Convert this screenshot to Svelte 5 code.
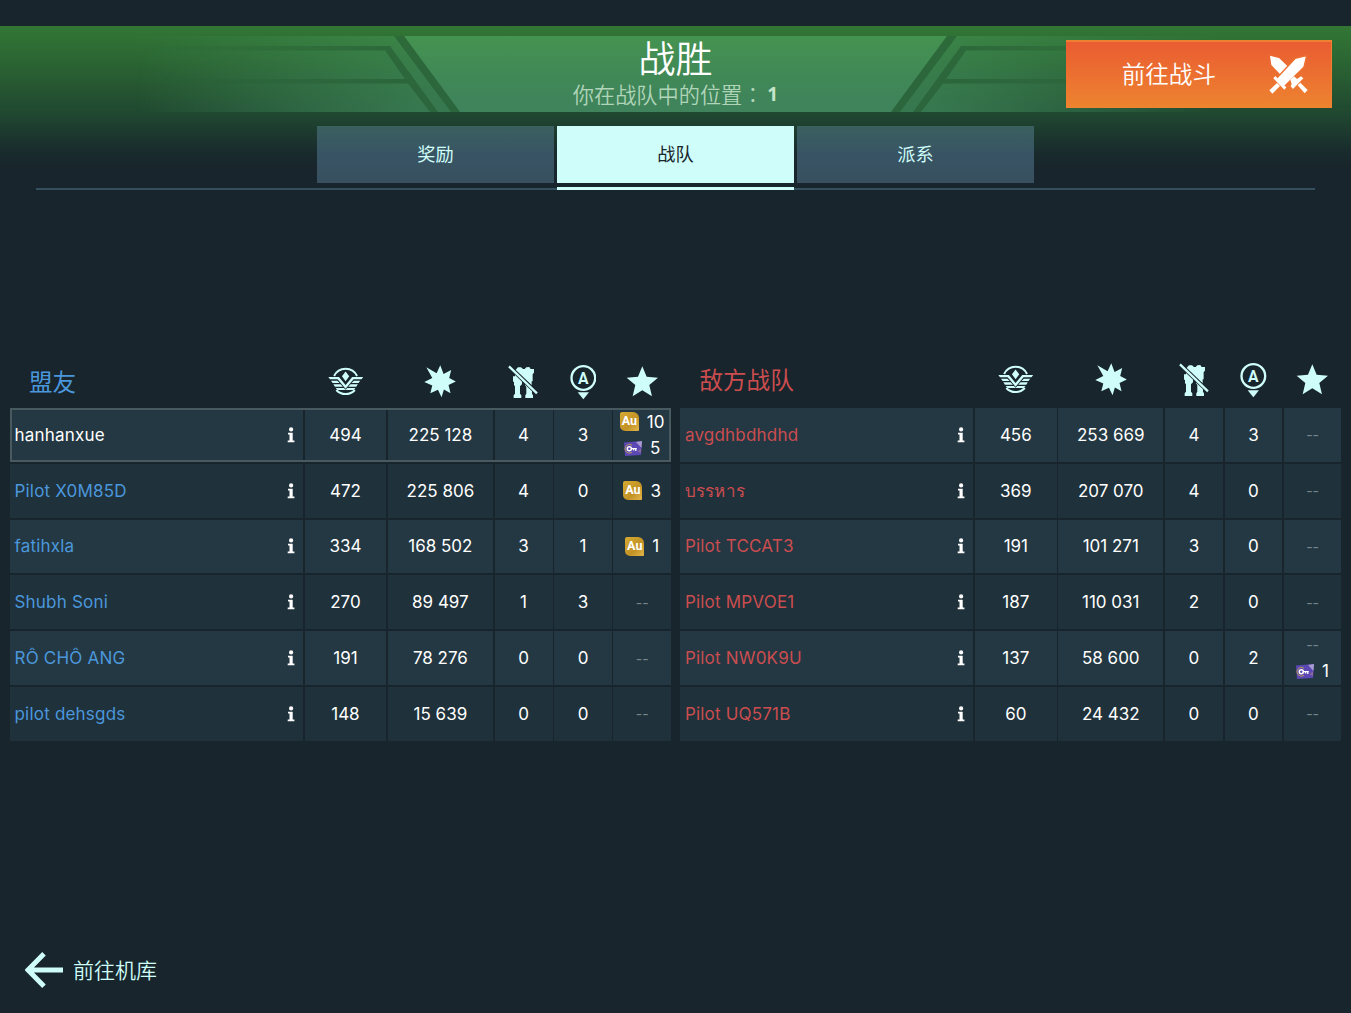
<script>
  const tabs = ["奖励", "战队", "派系"];
  let activeTab = "战队";

  const columns = ["rank", "damage", "kills", "beacons", "star"];

  const teams = [
    {
      title: "盟友",
      side: "ally",
      players: [
        { name: "hanhanxue", stats: ["494", "225 128", "4", "3"], gold: 10, keys: 5, me: true },
        { name: "Pilot X0M85D", stats: ["472", "225 806", "4", "0"], gold: 3 },
        { name: "fatihxla", stats: ["334", "168 502", "3", "1"], gold: 1 },
        { name: "Shubh Soni", stats: ["270", "89 497", "1", "3"] },
        { name: "RÔ CHÔ ANG", stats: ["191", "78 276", "0", "0"] },
        { name: "pilot dehsgds", stats: ["148", "15 639", "0", "0"] },
      ],
    },
    {
      title: "敌方战队",
      side: "enemy",
      players: [
        { name: "avgdhbdhdhd", stats: ["456", "253 669", "4", "3"] },
        { name: "บรรหาร", stats: ["369", "207 070", "4", "0"] },
        { name: "Pilot TCCAT3", stats: ["191", "101 271", "3", "0"] },
        { name: "Pilot MPVOE1", stats: ["187", "110 031", "2", "0"] },
        { name: "Pilot NW0K9U", stats: ["137", "58 600", "0", "2"], keys: 1 },
        { name: "Pilot UQ571B", stats: ["60", "24 432", "0", "0"] },
      ],
    },
  ];
</script>

<div class="screen">
  <header>
    <svg class="banner" viewBox="0 0 1351 140" width="1351" height="140">
      <defs>
        <linearGradient id="side" x1="0" x2="1" y1="0" y2="0">
          <stop offset="0.1" stop-color="#5fc585" stop-opacity="0" />
          <stop offset="0.31" stop-color="#5fc585" stop-opacity="0.24" />
          <stop offset="0.69" stop-color="#5fc585" stop-opacity="0.24" />
          <stop offset="0.9" stop-color="#5fc585" stop-opacity="0" />
        </linearGradient>
        <linearGradient id="mid" x1="0" x2="0" y1="0" y2="1">
          <stop offset="0" stop-color="#6ccb78" stop-opacity="0.2" />
          <stop offset="1" stop-color="#62b795" stop-opacity="0.18" />
        </linearGradient>
        <linearGradient id="base" x1="0" x2="0" y1="0" y2="1">
          <stop offset="0" stop-color="#3c8558" stop-opacity="0" />
          <stop offset="1" stop-color="#3c8558" stop-opacity="0.38" />
        </linearGradient>
        <linearGradient id="line" gradientUnits="userSpaceOnUse" x1="140" x2="400" y1="0" y2="0">
          <stop offset="0" stop-color="#265c33" stop-opacity="0" />
          <stop offset="1" stop-color="#265c33" stop-opacity="0.65" />
        </linearGradient>
        <linearGradient id="fade" x1="0" x2="1" y1="0" y2="0">
          <stop offset="0.1" stop-color="#fff" stop-opacity="0" />
          <stop offset="0.31" stop-color="#fff" />
          <stop offset="0.69" stop-color="#fff" />
          <stop offset="0.9" stop-color="#fff" stop-opacity="0" />
        </linearGradient>
        <mask id="sides"><rect width="1351" height="140" fill="url(#fade)" /></mask>
        <g id="struts">
          <path d="M140 20H390L398 31L438 86H430L408 57.500H140V53H405L385 24.500H140Z" fill="url(#line)" />
          <path d="M394 10H404L460 86H451Z" fill="#265c33" fill-opacity="0.65" />
        </g>
      </defs>
      <rect y="10" width="1351" height="76" fill="url(#base)" mask="url(#sides)" />
      <rect y="10" width="1351" height="76" fill="url(#side)" />
      <path d="M404 10H947L891 86H460Z" fill="url(#mid)" />
      <use href="#struts" />
      <use href="#struts" transform="translate(1351 0) scale(-1 1)" />
    </svg>

    <div class="result">
      <h1>战胜</h1>
      <p>你在战队中的位置<span class="colon">：</span><b>1</b></p>
    </div>

    <button class="battle">
      <span>前往战斗</span>
      <svg viewBox="808 106 117 117" width="39" height="39" fill="#fff">
        <path d="M811 108L838 115L863 139L841 163L815 136Z" />
        <path d="M887 116L921 108L913 142L852 203L828 179Z" stroke="#ed7230" stroke-width="4" />
        <path d="M827 169L860 203L854 210L821 176Z" />
        <path d="M832 190L841 199L818 222L809 212Z" />
        <path d="M872 180L883 170L889 175L892 178L904 170L911 176L880 208L873 200L876 193Z" />
        <path d="M894 197L902 189L924 211L915 221Z" />
      </svg>
    </button>

    <nav>
      {#each tabs as tab}
        <button class="tab" class:active={tab === activeTab} on:click={() => (activeTab = tab)}>
          {tab}
        </button>
      {/each}
    </nav>
  </header>

  <main>
    {#each teams as team}
      <section class={team.side}>
        <div class="row head">
          <h2>{team.title}</h2>
          {#each columns as column}
            <div class="icon">
              {#if column === "rank"}
                <svg viewBox="53 54 107 86" width="35.500" height="28.700">
                  <path d="M71.500 81A38 38 0 0 1 140.500 81M78 123A38 38 0 0 0 134 123" fill="none" stroke="#cffdf9" stroke-width="6" />
                  <path d="M106 67L117 82L106 97L95 82Z" fill="#cffdf9" />
                  <path d="M54 84H86L106 108L126 84H159L154 91H130L106 119L82 91H59Z" fill="#cffdf9" />
                  <path d="M62 95H81L88 102H67ZM150 95H131L124 102H145ZM69 106H91L98 113H74ZM143 106H121L114 113H138ZM76 117H101L106 122L111 117H136L130 123H82Z" fill="#cffdf9" />
                </svg>
              {:else if column === "damage"}
                <svg viewBox="342 47 98 98" width="32.500" height="32.500">
                  <path d="M391 48L401 74L424 62L418 86L438 97L416 107L422 132L402 121L395 144L384 122L361 132L367 109L343 98L367 86L349 54L380 72Z" fill="#cffdf9" />
                </svg>
              {:else if column === "kills"}
                <svg viewBox="596 48 91 101" width="30.300" height="33.700">
                  <path d="M618 64L626 55H635L641 60H646L651 55L660 54L664 60H674V71L670 76V97H667V110L668 112V134L671 139V147H648V139L651 134V114L647 108V97H638V106L632 112V134L636 139V147H613V139L617 134V112L614 108V98H611V82H617V72Z" fill="#cffdf9" />
                  <path d="M597 50L685 134" stroke="#18252c" stroke-width="12.500" />
                  <path d="M599 52L683 133" stroke="#cffdf9" stroke-width="7" />
                </svg>
              {:else if column === "beacons"}
                <svg viewBox="778 41 80 108" width="26.700" height="36">
                  <circle cx="818" cy="83" r="35.500" fill="none" stroke="#cffdf9" stroke-width="7" />
                  <text x="818" y="100" text-anchor="middle">A</text>
                  <path d="M801 126H835L818 147Z" fill="#cffdf9" />
                </svg>
              {:else}
                <svg viewBox="947 48 97 92" width="32.300" height="30.700">
                  <path d="M996 49L1009 80L1043 83L1017 105L1025 139L996 121L967 139L975 105L949 83L983 80Z" fill="#cffdf9" />
                </svg>
              {/if}
            </div>
          {/each}
        </div>

        {#each team.players as player}
          <div class="row" class:me={player.me}>
            <div class="cell name">
              <span>{player.name}</span>
              <svg viewBox="0 0 8 16" width="8" height="16" fill="#fff">
                <circle cx="4.100" cy="2.400" r="2.100" />
                <path d="M1 5.800H5.700V13.400H7.400V15.200H0.700V13.400H2.500V7.600H1Z" />
              </svg>
            </div>
            {#each player.stats as stat}
              <div class="cell">{stat}</div>
            {/each}
            <div class="cell rewards">
              {#if player.gold}
                <div class="reward">
                  <span class="gold">Au</span>
                  {player.gold}
                </div>
              {:else}
                <div class="reward none">--</div>
              {/if}
              {#if player.keys}
                <div class="reward">
                  <svg viewBox="0 0 18 15" width="18" height="15">
                    <path d="M0 1.500L18 0L17 14L1 15Z" fill="#5b48b4" />
                    <path d="M12 1L18 0L17.500 7Z" fill="#a99bd0" />
                    <path d="M13.500 10.500L17 7V12Z" fill="#8a67a0" />
                    <path d="M8 4.200A4.400 4.400 0 1 0 8 11.300" fill="none" stroke="#b99a58" stroke-width="1" />
                    <circle cx="5.300" cy="7.700" r="2" fill="none" stroke="#fff" stroke-width="1.500" />
                    <path d="M7 7.700H12.800M11.800 7.700V10M9.600 7.700V9.500" fill="none" stroke="#fff" stroke-width="1.300" />
                  </svg>
                  {player.keys}
                </div>
              {/if}
            </div>
          </div>
        {/each}
      </section>
    {/each}
  </main>

  <footer>
    <svg viewBox="0 0 38 36" width="38" height="36">
      <path d="M19 1.800L3 18L19 34.200M3 18H38" fill="none" stroke="#cffdf9" stroke-width="5" />
    </svg>
    <span>前往机库</span>
  </footer>
</div>

<style>
  :global(body) {
    margin: 0;
    background: #18252c;
  }

  .screen {
    display: flex;
    flex-direction: column;
    box-sizing: border-box;
    width: 1351px;
    height: 1013px;
    padding-top: 26px;
    overflow: hidden;
    background: #18252c;
    color: #fff;
    font-family: Inter, "Noto Sans", "Noto Sans CJK SC", sans-serif;
  }

  header {
    position: relative;
    height: 164px;
    background: linear-gradient(#327634 0, #2d6a34 26px, #265731 60px, #1f4530 92px, #192b2d 126px, #18252c 142px);
  }

  .banner {
    position: absolute;
    top: 0;
    left: 0;
  }

  .result {
    position: relative;
    height: 100px;
    text-align: center;
  }

  h1 {
    margin: 0;
    padding-top: 10px;
    font: 350 37px/42px "Noto Sans CJK SC", sans-serif;
  }

  .result p {
    display: flex;
    justify-content: center;
    align-items: center;
    margin: 2px 0 0;
    font: 350 21.2px/28px "Noto Sans CJK SC", sans-serif;
    color: #b0d5b9;
  }

  .colon {
    width: 25px;
    font-family: "Noto Sans CJK TC", sans-serif;
    text-align: left;
  }

  .result b {
    font: 700 19px/28px "Noto Sans", sans-serif;
    color: #c4e4ca;
  }

  button {
    padding: 0;
    border: 0;
    color: inherit;
  }

  .battle {
    position: absolute;
    top: 14px;
    right: 19px;
    display: flex;
    align-items: center;
    justify-content: flex-end;
    gap: 53px;
    box-sizing: border-box;
    width: 266px;
    height: 68px;
    padding-right: 23px;
    border-top: 2px solid #ef8030;
    border-right: 1px solid #ef8030;
    background: linear-gradient(#ea5c32, #ed842f);
    font: 350 23.6px "Noto Sans CJK SC", sans-serif;
  }

  .battle span {
    padding-bottom: 4px;
  }

  .battle svg {
    margin-bottom: 1px;
  }

  nav {
    position: relative;
    display: flex;
    justify-content: center;
    gap: 3px;
    box-sizing: border-box;
    height: 64px;
    margin: 0 36px;
    border-bottom: 2px solid #34505f;
  }

  .tab {
    position: relative;
    width: 237px;
    height: 57px;
    padding-bottom: 4px;
    background: linear-gradient(#3b6060, #385464 50%, #38505f);
    color: #cffdf9;
    font: 18.2px "Noto Sans CJK SC", sans-serif;
  }

  .tab.active {
    background: #cffdf9;
    color: #18252c;
  }

  .tab.active::after {
    content: "";
    position: absolute;
    left: 0;
    bottom: -7px;
    width: 100%;
    height: 3px;
    background: #cffdf9;
  }

  main {
    display: flex;
    gap: 8.6px;
    margin: 158px 0 0 9.5px;
  }

  section {
    display: flex;
    flex-direction: column;
    gap: 2px;
    width: 661.8px;
  }

  .row {
    position: relative;
    display: grid;
    grid-template-columns: 293.5px 81.5px 105px 58px 57.5px 57.5px;
    column-gap: 1.7px;
    height: 53.8px;
  }

  .head {
    height: 58px;
  }

  .enemy .head > * {
    transform: translateY(-2px);
  }

  h2 {
    margin: 0;
    padding-left: 19.5px;
    font: 400 23.6px/66px "Noto Sans CJK SC", sans-serif;
  }

  .icon {
    display: flex;
    align-items: center;
    justify-content: center;
    padding-top: 1px;
  }

  .icon text {
    font: 700 47px Roboto, sans-serif;
    fill: #cffdf9;
  }

  .ally h2,
  .ally .name {
    color: #4b97dc;
  }

  .enemy h2,
  .enemy .name {
    color: #cb4d4f;
  }

  .cell {
    display: flex;
    align-items: center;
    justify-content: center;
    background: #1f313a;
    font-size: 17px;
  }

  .row:nth-child(even) .cell {
    background: #243843;
  }

  .name {
    justify-content: space-between;
    padding: 0 8.5px 0 5px;
    letter-spacing: 0.2px;
  }

  .me .name {
    color: #fff;
  }

  .me::after {
    content: "";
    position: absolute;
    inset: 0;
    border: 2px solid #48595f;
  }

  .rewards {
    flex-direction: column;
  }

  .reward {
    display: flex;
    align-items: center;
    justify-content: center;
    gap: 8px;
    height: 26.5px;
  }

  .none {
    color: #78868b;
    font-size: 14px;
  }

  .gold {
    width: 19px;
    height: 19px;
    border-radius: 2px 6px 1px 5px;
    background: linear-gradient(135deg, #d5aa32, #c39225 60%, #e3b74c);
    font: 700 12.5px/18px Roboto, sans-serif;
    text-align: center;
  }

  footer {
    display: flex;
    align-items: center;
    gap: 10px;
    margin: auto 0 25px 25px;
    color: #cffdf9;
    font: 350 21px/34px "Noto Sans CJK SC", sans-serif;
  }

  footer span {
    padding-bottom: 2px;
  }
</style>
